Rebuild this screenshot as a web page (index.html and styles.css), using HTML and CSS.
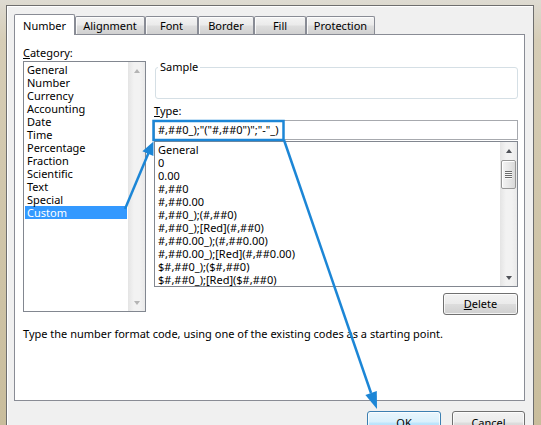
FILE: index.html
```html
<!DOCTYPE html>
<html>
<head>
<meta charset="utf-8">
<title>Format Cells</title>
<link rel="stylesheet" href="styles.css">
</head>
<body>
<div class="dialog">
  <div class="tabs">
    <div class="tab active t-number">Number</div>
    <div class="tab t-align">Alignment</div>
    <div class="tab t-font">Font</div>
    <div class="tab t-border">Border</div>
    <div class="tab t-fill">Fill</div>
    <div class="tab t-prot">Protection</div>
  </div>
  <div class="panel">
    <div class="cols">
      <div class="col-left">
        <div class="label"><u>C</u>ategory:</div>
        <div class="listbox cat-list">
          <ul class="items">
            <li>General</li>
            <li>Number</li>
            <li>Currency</li>
            <li>Accounting</li>
            <li>Date</li>
            <li>Time</li>
            <li>Percentage</li>
            <li>Fraction</li>
            <li>Scientific</li>
            <li>Text</li>
            <li>Special</li>
            <li class="selected">Custom</li>
          </ul>
          <div class="vscroll disabled">
            <span class="sbtn"><span class="arr up"></span></span>
            <span class="sbtn"><span class="arr down"></span></span>
          </div>
        </div>
      </div>
      <div class="col-right">
        <fieldset class="sample">
          <legend>Sample</legend>
          <div class="sample-body"></div>
        </fieldset>
        <div class="label type-label"><u>T</u>ype:</div>
        <div class="textbox">#,##0_);"("#,##0")";"-"_)</div>
        <div class="listbox type-list">
          <ul class="items">
            <li>General</li>
            <li>0</li>
            <li>0.00</li>
            <li>#,##0</li>
            <li>#,##0.00</li>
            <li>#,##0_);(#,##0)</li>
            <li>#,##0_);[Red](#,##0)</li>
            <li>#,##0.00_);(#,##0.00)</li>
            <li>#,##0.00_);[Red](#,##0.00)</li>
            <li>$#,##0_);($#,##0)</li>
            <li>$#,##0_);[Red]($#,##0)</li>
          </ul>
          <div class="vscroll">
            <span class="sbtn"><span class="arr up"></span></span>
            <span class="thumb"><span class="grip"></span></span>
            <span class="spacer"></span>
            <span class="sbtn"><span class="arr down"></span></span>
          </div>
        </div>
        <div class="del-row">
          <button class="btn btn-delete"><u>D</u>elete</button>
        </div>
      </div>
    </div>
    <p class="hint">Type the number format code, using one of the existing codes as a starting point.</p>
  </div>
  <div class="actions">
    <button class="btn btn-default btn-ok">OK</button>
    <button class="btn btn-cancel">Cancel</button>
  </div>
</div>

<svg class="overlay" width="541" height="425" viewBox="0 0 541 425">
  <rect x="153.5" y="121" width="130" height="19" fill="none" stroke="#1c86d6" stroke-width="2.5"/>
  <line x1="125" y1="209" x2="148.4" y2="153.3" stroke="#1c86d6" stroke-width="2.5"/>
  <polygon points="153.5,141.5 153.4,155.9 142.4,151.3" fill="#1c86d6"/>
  <line x1="284" y1="140" x2="371" y2="393" stroke="#1c86d6" stroke-width="2.5"/>
  <polygon points="377,409 376.8,391 365.4,394.9" fill="#1c86d6"/>
</svg>
</body>
</html>
```

FILE: styles.css
```css
* {
  box-sizing: border-box;
}

html, body {
  margin: 0;
  padding: 0;
}

body {
  width: 541px;
  height: 425px;
  overflow: hidden;
  position: relative;
  font-family: "Noto Sans", "Open Sans", sans-serif;
  font-size: 11px;
  color: #000;
  background: linear-gradient(180deg, #dedbd2 0px, #d6cdb6 40px, #c9bd9c 425px);
}

.dialog {
  margin: 5px 0 0 6px;
  width: 528px;
  height: 425px;
  border: 1px solid #6e6e6e;
  border-bottom: none;
  background: #f0f0f0;
  padding: 8px 8px 0 7px;
  box-shadow: inset 1px 1px 0 #ffffff;
}

/* ---------- tabs ---------- */
.tabs {
  display: flex;
  align-items: flex-end;
  height: 20px;
  position: relative;
  z-index: 1;
}

.tab {
  height: 18px;
  border: 1px solid #898c95;
  border-bottom: none;
  border-radius: 2px 2px 0 0;
  background: linear-gradient(180deg, #f4f4f4 0%, #ebebeb 45%, #dddddd 55%, #d0d0d0 100%);
  text-align: center;
  line-height: 18px;
  white-space: nowrap;
  box-shadow: inset 1px 1px 0 rgba(255, 255, 255, 0.8);
}

.tab.active {
  height: 21px;
  margin-bottom: -1px;
  background: #ffffff;
  line-height: 22px;
  box-shadow: none;
}

.t-number { width: 61px; }
.t-align  { width: 70px; }
.t-font   { width: 53px; }
.t-border { width: 56px; }
.t-fill   { width: 52px; }
.t-prot   { width: 69px; }

/* ---------- panel ---------- */
.panel {
  background: #ffffff;
  border: 1px solid #898c95;
  height: 367px;
  padding: 10px 7px 0 8px;
}

.cols {
  display: grid;
  grid-template-columns: 123px 364px;
  column-gap: 8px;
  align-items: start;
}

.col-left,
.col-right {
  display: flex;
  flex-direction: column;
}

.label {
  line-height: 16px;
  height: 16px;
}

.label u,
.btn u {
  text-decoration: underline;
  text-underline-offset: 1px;
}

/* ---------- list boxes ---------- */
.listbox {
  display: flex;
  border: 1px solid #828790;
  background: #ffffff;
}

.cat-list {
  height: 251px;
}

.items {
  list-style: none;
  margin: 0;
  padding: 1px 1px 0 1px;
  flex: 1;
  min-width: 0;
}

.items li {
  height: 13px;
  line-height: 13px;
  padding-left: 2px;
  white-space: nowrap;
}

.items li.selected {
  background: #3399ff;
  color: #ffffff;
}

.type-list {
  margin-top: 1px;
  height: 146px;
}

/* ---------- scrollbars ---------- */
.vscroll {
  width: 17px;
  display: flex;
  flex-direction: column;
  justify-content: space-between;
  background: linear-gradient(90deg, #e4e4e4 0%, #f2f2f2 35%, #f2f2f2 70%, #e9e9e9 100%);
}

.sbtn {
  height: 17px;
  display: flex;
  align-items: center;
  justify-content: center;
}

.arr {
  width: 0;
  height: 0;
  border-left: 3.5px solid transparent;
  border-right: 3.5px solid transparent;
}

.arr.up {
  border-bottom: 4px solid #4f5258;
}

.arr.down {
  border-top: 4px solid #4f5258;
}

.vscroll.disabled .arr.up {
  border-bottom-color: #b4b4b4;
}

.vscroll.disabled .arr.down {
  border-top-color: #b4b4b4;
}

.thumb {
  margin: 1px 1px 0 1px;
  height: 29px;
  border: 1px solid #979797;
  border-radius: 2px;
  background: linear-gradient(90deg, #f4f4f4 0%, #e8e8e8 50%, #d9d9d9 100%);
  box-shadow: inset 1px 1px 0 #ffffff;
  display: flex;
  align-items: center;
  justify-content: center;
}

.grip {
  width: 7px;
  height: 8px;
  background: repeating-linear-gradient(180deg, #6b6b6b 0px, #6b6b6b 1px, #f8f8f8 1px, #f8f8f8 2px);
}

.spacer {
  flex: 1;
}

/* ---------- sample ---------- */
.sample {
  margin: 15px 0 0 1px;
  padding: 0;
  border: 1px solid #d5dfe5;
  border-radius: 3px;
  min-width: 0;
}

.sample legend {
  margin-left: 2px;
  padding: 0 2px;
  line-height: 14px;
}

.sample-body {
  height: 24px;
}

.type-label {
  margin-top: 4px;
}

.textbox {
  margin-top: 1px;
  height: 20px;
  border: 1px solid #a7a9ae;
  padding: 0 3px;
  line-height: 18px;
  white-space: nowrap;
  background: #ffffff;
}

/* ---------- buttons ---------- */
.btn {
  font: inherit;
  color: #000;
  padding: 0;
  border: 1px solid #707070;
  border-radius: 3px;
  background: linear-gradient(180deg, #f2f2f2 0%, #ebebeb 48%, #dddddd 52%, #cfcfcf 100%);
  box-shadow: inset 0 0 0 1px rgba(255, 255, 255, 0.75);
  height: 22px;
  line-height: 18px;
}

.btn-default {
  border-color: #3c7fb1;
  background: linear-gradient(180deg, #eaf6fd 0%, #d9f0fc 48%, #bee6fd 52%, #a7d9f5 100%);
}

.del-row {
  margin-top: 6px;
  display: flex;
  justify-content: flex-end;
}

.btn-delete {
  width: 75px;
}

.hint {
  margin: 11px 0 0 0;
  line-height: 16px;
  white-space: nowrap;
}

.actions {
  margin-top: 10px;
  display: flex;
  justify-content: flex-end;
  gap: 11px;
}

.btn-ok {
  width: 74px;
  height: 23px;
}

.btn-cancel {
  width: 73px;
  height: 23px;
}

/* ---------- annotation overlay ---------- */
.overlay {
  position: absolute;
  left: 0;
  top: 0;
  pointer-events: none;
}
```
